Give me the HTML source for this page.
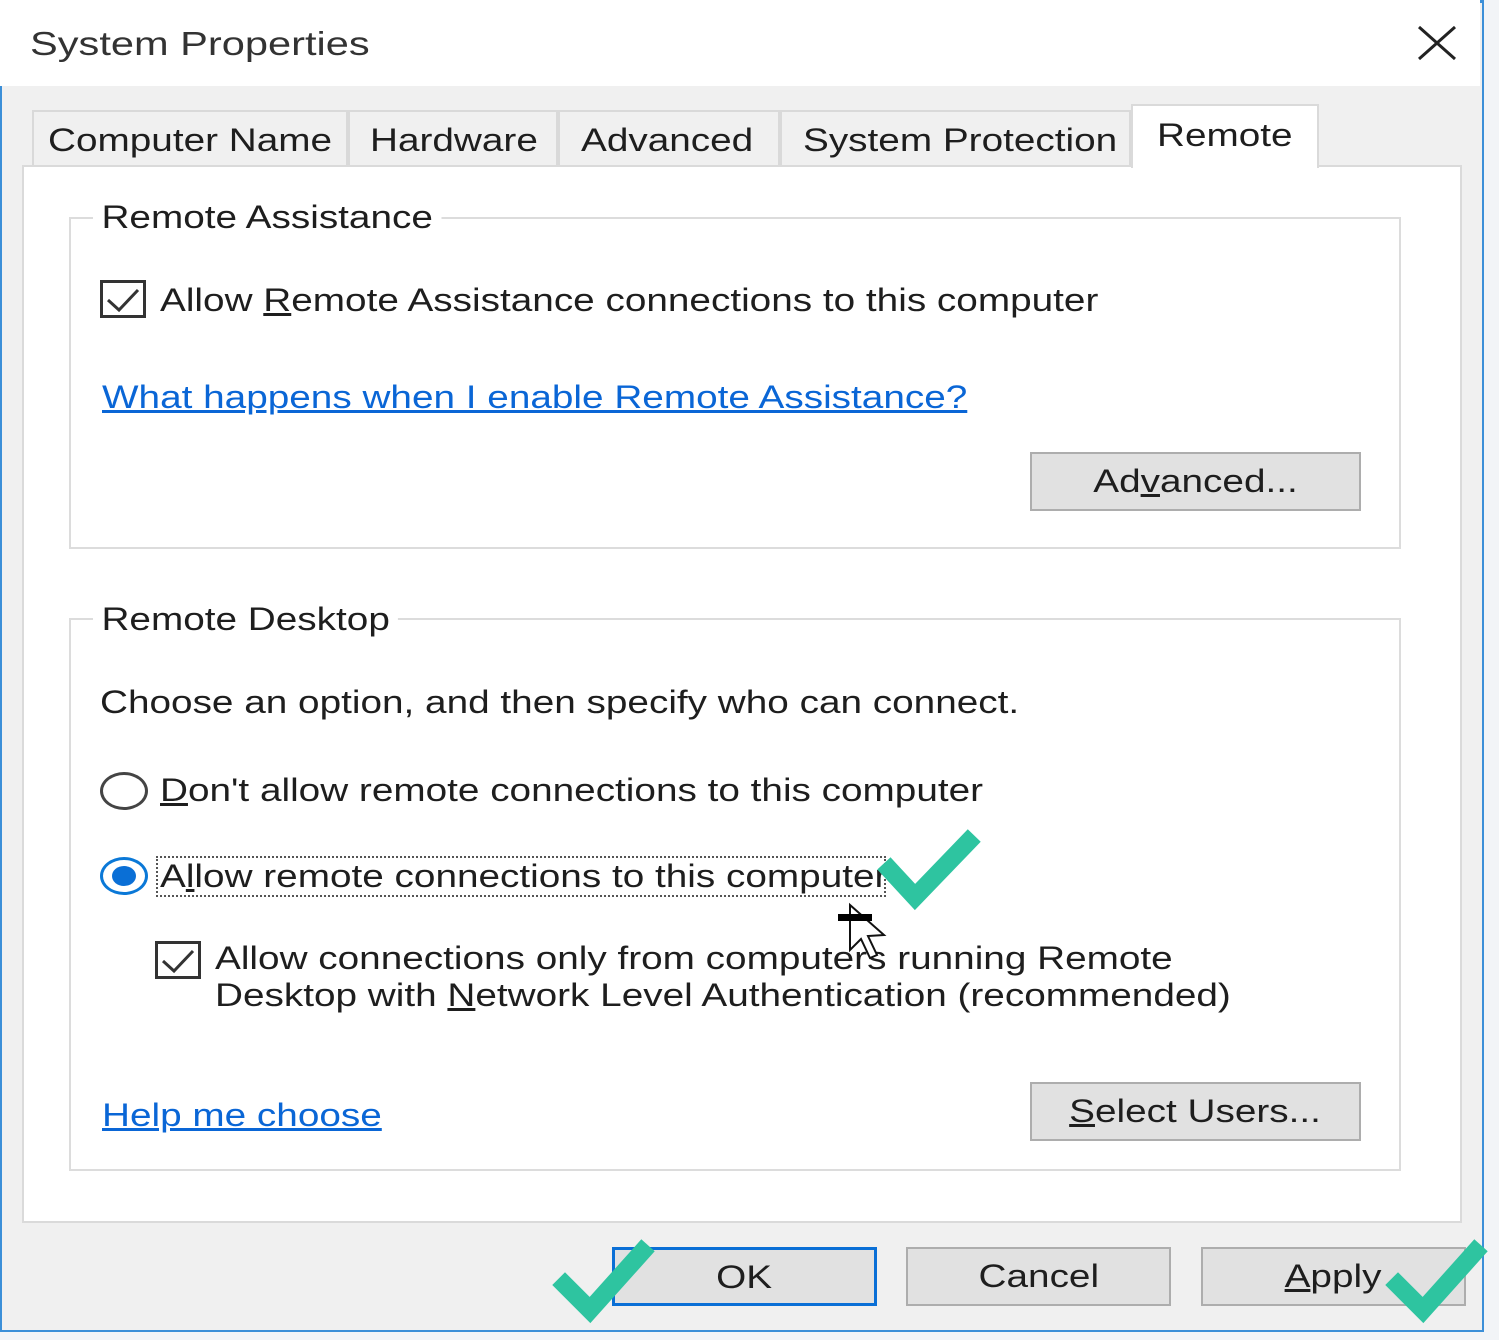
<!DOCTYPE html>
<html><head><meta charset="utf-8"><style>
*{margin:0;padding:0;box-sizing:border-box}
body{width:1499px;height:1340px;overflow:hidden;background:#f2f4f7;font-family:"Liberation Sans",sans-serif;color:#1e1e1e;position:relative}
.a{position:absolute}
.t{font-size:32px;white-space:nowrap;line-height:1;transform:scaleX(1.21);transform-origin:0 0}
.win{left:0;top:0;width:1484px;height:1332px;background:#f0f0f0;border:2px solid #3c8fd8;border-top:3px solid #3c8fd8}
.title{left:0;top:0;width:1480px;height:86px;background:#fff}
.tab{top:110px;height:56px;background:#f0f0f0;border:2px solid #d9d9d9;border-bottom:none}
.panel{left:22px;top:165px;width:1440px;height:1058px;background:#fff;border:2px solid #dadada}
.grp{border:2px solid #dcdcdc}
.lbl{background:#fff;padding:0 7px}
.btn{background:#e1e1e1;border:2px solid #adadad;font-size:32px;text-align:center;line-height:54px}
.btn span{display:inline-block;transform:scaleX(1.21)}
.link{color:#0a66d6;text-decoration:underline}
.cb{width:46px;height:38px;border:3px solid #333;background:#fff}
u{text-decoration:underline}
</style></head><body>
<div class="a win"></div>
<div class="a title"></div>
<div class="a t" style="left:30px;top:27px;font-size:33px;color:#333;transform:scaleX(1.26)">System Properties</div>
<svg class="a" style="left:1416px;top:24px" width="42" height="38"><path d="M3 3L39 35M39 3L3 35" stroke="#222" stroke-width="3"/></svg>

<div class="a tab" style="left:32px;width:316px"></div>
<div class="a t" style="left:48px;top:124px">Computer Name</div>
<div class="a tab" style="left:348px;width:210px"></div>
<div class="a t" style="left:370px;top:124px">Hardware</div>
<div class="a tab" style="left:558px;width:222px"></div>
<div class="a t" style="left:581px;top:124px">Advanced</div>
<div class="a tab" style="left:780px;width:351px"></div>
<div class="a t" style="left:803px;top:124px">System Protection</div>

<div class="a panel"></div>
<div class="a" style="left:1131px;top:104px;width:188px;height:64px;background:#fff;border:2px solid #dadada;border-bottom:none"></div>
<div class="a t" style="left:1157px;top:119px">Remote</div>

<div class="a grp" style="left:69px;top:217px;width:1332px;height:332px"></div>
<div class="a t lbl" style="left:93px;top:201px">Remote Assistance</div>
<div class="a cb" style="left:100px;top:280px"></div>
<svg class="a" style="left:104px;top:284px" width="40" height="32"><path d="M4 16L15 26L34 6" stroke="#333" stroke-width="3" fill="none"/></svg>
<div class="a t" style="left:160px;top:284px">Allow <u>R</u>emote Assistance connections to this computer</div>
<div class="a t link" style="left:102px;top:381px">What happens when I enable Remote Assistance?</div>
<div class="a btn" style="left:1030px;top:452px;width:331px;height:59px"><span>Ad<u>v</u>anced...</span></div>

<div class="a grp" style="left:69px;top:618px;width:1332px;height:553px"></div>
<div class="a t lbl" style="left:93px;top:603px">Remote Desktop</div>
<div class="a t" style="left:100px;top:686px">Choose an option, and then specify who can connect.</div>
<div class="a" style="left:100px;top:772px;width:48px;height:38px;border-radius:50%;border:3px solid #444;background:#fff"></div>
<div class="a t" style="left:160px;top:774px"><u>D</u>on't allow remote connections to this computer</div>
<div class="a" style="left:100px;top:857px;width:48px;height:38px;border-radius:50%;border:3px solid #0a78d7;background:#fff"></div>
<div class="a" style="left:112px;top:866px;width:24px;height:20px;border-radius:50%;background:#0a6fd6"></div>
<div class="a" style="left:156px;top:856px;width:730px;height:41px;border:2px dotted #555"></div>
<div class="a t" style="left:160px;top:860px">A<u>l</u>low remote connections to this computer</div>
<div class="a cb" style="left:155px;top:941px"></div>
<svg class="a" style="left:159px;top:945px" width="40" height="32"><path d="M4 16L15 26L34 6" stroke="#333" stroke-width="3" fill="none"/></svg>
<div class="a t" style="left:215px;top:942px">Allow connections only from computers running Remote</div>
<div class="a t" style="left:215px;top:979px">Desktop with <u>N</u>etwork Level Authentication (recommended)</div>
<div class="a t link" style="left:102px;top:1099px">Help me choose</div>
<div class="a btn" style="left:1030px;top:1082px;width:331px;height:59px"><span><u>S</u>elect Users...</span></div>

<div class="a btn" style="left:612px;top:1247px;width:265px;height:59px;border:3px solid #0a6fd6"><span>OK</span></div>
<div class="a btn" style="left:906px;top:1247px;width:265px;height:59px"><span>Cancel</span></div>
<div class="a btn" style="left:1201px;top:1247px;width:265px;height:59px"><span><u>A</u>pply</span></div>

<svg class="a" style="left:0;top:0" width="1499" height="1340">
<g stroke="#2ec4a0" stroke-width="18" fill="none" stroke-linecap="square">
<path d="M890 870L915 897L968 842"/>
<path d="M565 1285L590 1310L642 1252"/>
<path d="M1398 1285L1423 1310L1475 1252"/>
</g>
<path d="M850 905L850 950L861 939L870 958L877 955L868 936L884 935Z" fill="#fff" stroke="#111" stroke-width="2"/>
<rect x="838" y="914" width="34" height="7" fill="#000"/>
</svg>
</body></html>
